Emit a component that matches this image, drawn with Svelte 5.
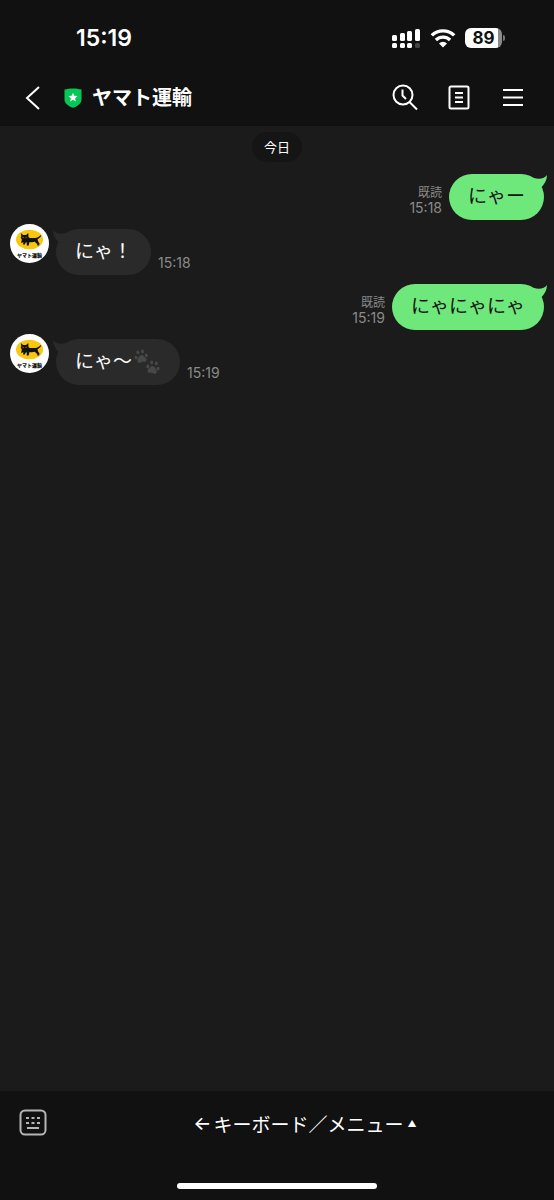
<script>
  const title = "ヤマト運輸";

  const messages = [
    { id: 1, mine: true, text: "にゃー", time: "15:18" },
    { id: 2, mine: false, text: "にゃ！", time: "15:18" },
    { id: 3, mine: true, text: "にゃにゃにゃ", time: "15:19" },
    { id: 4, mine: false, text: "にゃ〜", time: "15:19", paws: true },
  ];

  const toes = [
    [3, 9],
    [6, 4],
    [11, 4],
    [14, 9],
  ];
</script>

{#snippet paw()}
  {#each toes as [x, y]}
    <ellipse cx={x} cy={y} rx="1.6" ry="2" />
  {/each}
  <path d="M8.5 7.500c-2.200 0-2.600 2-4 3.300-1.600 1.600-1 4.400 1.300 4.400 1.100 0 1.700-.5 2.700-.5s1.600.5 2.700.5c2.300 0 2.900-2.800 1.300-4.400-1.400-1.300-1.800-3.300-4-3.300z" />
{/snippet}

<div class="app">
  <header>
    <div class="status-bar">
      <span class="clock">15:19</span>
      <div class="status-icons">
        <svg width="30" height="22" viewBox="0 0 30 22" fill="#fff" aria-hidden="true">
          <rect x="1" y="8" width="5" height="6" rx="1.500" />
          <rect x="9" y="6" width="5" height="8" rx="1.500" />
          <rect x="16" y="4" width="5" height="10" rx="1.500" />
          <rect x="24" y="2" width="5" height="12" rx="1.500" />
          <rect x="1" y="16" width="5" height="5" rx="1.500" />
          <rect x="9" y="16" width="5" height="5" rx="1.500" />
          <rect x="16" y="16" width="5" height="5" rx="1.500" />
          <rect x="24" y="16" width="5" height="5" rx="1.500" fill="#444" />
        </svg>
        <svg width="26" height="20" viewBox="0 0 26 20" aria-hidden="true">
          <g fill="none" stroke="#fff" stroke-width="3.400">
            <path d="M1.800 7.400a16 16 0 0 1 22.400 0" />
            <path d="M5.900 12a10.200 10.200 0 0 1 14.200 0" />
          </g>
          <path d="M13 19.500l-4-4.100a5.700 5.700 0 0 1 8 0z" fill="#fff" />
        </svg>
        <div class="battery"><span>89</span></div>
      </div>
    </div>

    <nav>
      <button class="back" aria-label="戻る">
        <svg width="16" height="26" viewBox="0 0 16 26" fill="none" stroke="#fff" stroke-width="2">
          <path d="M15 2L3 13l12 11" />
        </svg>
      </button>
      <svg class="shield" width="18" height="20" viewBox="0 0 18 20" aria-hidden="true">
        <path d="M9 0.500C6.500 0.500 3 .9.500 1.600V11.500C.5 15.500 4.500 18.200 9 19.800c4.500-1.600 8.500-4.300 8.500-8.300V1.600C15 .9 11.500.5 9 .5z" fill="#06c755" />
        <path d="M9 4.800l1.300 3 3.200.3-2.400 2.100.7 3.200L9 11.700l-2.800 1.700.7-3.200-2.400-2.100 3.200-.3z" fill="#fff" />
      </svg>
      <h1>{title}</h1>
      <div class="actions">
        <button aria-label="検索">
          <svg width="28" height="28" viewBox="0 0 28 28" fill="none" stroke="#fff" stroke-width="2">
            <circle cx="12" cy="11" r="9.500" />
            <path d="M18.500 18l7.500 7.500M11.500 5.500v6l3.500 3.500" />
          </svg>
        </button>
        <button aria-label="ノート">
          <svg width="28" height="28" viewBox="0 0 28 28" fill="none" stroke="#fff" stroke-width="2">
            <rect x="4.500" y="2.500" width="19" height="22" rx="1.500" />
            <path d="M10 9h8M10 13.500h8M10 18h8" />
          </svg>
        </button>
        <button aria-label="メニュー">
          <svg width="28" height="28" viewBox="0 0 28 28" fill="none" stroke="#fff" stroke-width="2">
            <path d="M4 6h20M4 13.500h20M4 21h20" />
          </svg>
        </button>
      </div>
    </nav>
  </header>

  <main>
    <div class="date">今日</div>
    {#each messages as message (message.id)}
      <div class="row" class:mine={message.mine}>
        {#if !message.mine}
          <svg class="avatar" width="39" height="39" viewBox="0 0 39 39" role="img" aria-label={title}>
            <circle cx="19.500" cy="19.500" r="19.500" fill="#fff" />
            <ellipse cx="19.500" cy="15.500" rx="13.500" ry="9.800" fill="#f9c70c" />
            <path
              d="M10.800 9l2.300 2h3l2.200-2 .2 4c.5.800 1.200 1.100 2.200 1.100h4.600c1.800-.1 3.300-1.300 5-2.600.6-.4 1.200.2.700.8-1.100 1.300-2.100 2.300-3.400 3 .1 1.800.9 2.800 1.900 4.300l-.5 1.900h-1.700l-.1-1.400-2.500-2.400c-1.600.6-3.500.6-5.200.2l-.8 3.700h-2l.1-3-.9-.4-1.100 2.200h-1.800l.4-2.500-1.600 1.100-.7-.6.8-2.600-1.200-2.300.6-1.300z"
              fill="#111"
            />
            <path d="M12.500 13.300l1.200.4M16.600 13.200l-1.100.5" stroke="#f9c70c" stroke-width=".7" />
            <text x="19.500" y="32.500" text-anchor="middle">{title}</text>
          </svg>
        {/if}
        <div class="bubble">
          <svg class="tail" width="16" height="16" viewBox="0 0 16 16" aria-hidden="true">
            <path d="M16 0C14 3 9 5 3 3L2 8l7 6 1.700-2C13.500 9 16 5 16 0z" />
          </svg>
          <span>{message.text}</span>
          {#if message.paws}
            <svg class="paws" width="28" height="28" viewBox="0 0 28 28" role="img" aria-label="足あと">
              <g transform="translate(0 0) rotate(-12 8 8) scale(.95)">{@render paw()}</g>
              <g transform="translate(12 11) rotate(12 8 8) scale(.95)">{@render paw()}</g>
            </svg>
          {/if}
        </div>
        <div class="meta">
          {#if message.mine}<span class="read">既読</span>{/if}
          <time>{message.time}</time>
        </div>
      </div>
    {/each}
  </main>

  <footer>
    <div class="menu-bar">
      <button class="keyboard" aria-label="キーボード">
        <svg width="28" height="28" viewBox="0 0 28 28" fill="none" stroke="#b5b5b5" stroke-width="2">
          <rect x="1.500" y="1.500" width="25" height="24" rx="4.500" />
          <path d="M7 9h3M12.500 9h3M18 9h3M7 14h3M12.500 14h3M18 14h3M8 19h12" />
        </svg>
      </button>
      <button class="menu-toggle">
        <span class="arrow">←</span><span>キーボード／メニュー</span><span class="up">▲</span>
      </button>
    </div>
    <div class="home-indicator"></div>
  </footer>
</div>

<style>
  :global(body) {
    margin: 0;
    background: #111;
  }

  .app {
    display: flex;
    flex-direction: column;
    min-height: 100vh;
    background: #1b1b1b;
    color: #fff;
    font-family: Inter, "Noto Sans CJK JP", sans-serif;
  }

  button {
    display: flex;
    align-items: center;
    justify-content: center;
    padding: 0;
    border: none;
    background: none;
    color: inherit;
    font: inherit;
    cursor: pointer;
  }

  svg {
    display: block;
    flex-shrink: 0;
  }

  header {
    background: #111;
    padding-bottom: 6px;
  }

  .status-bar {
    display: flex;
    align-items: center;
    justify-content: space-between;
    height: 76px;
    padding: 0 52px 0 76px;
  }

  .clock {
    font-size: 23px;
    font-weight: 600;
  }

  .status-icons {
    display: flex;
    align-items: center;
    gap: 9px;
  }

  .battery {
    position: relative;
    width: 37px;
    height: 20px;
    border-radius: 6px;
    background: linear-gradient(to right, #fff 89%, #8a8a8a 89%);
    color: #111;
    font-size: 17px;
    font-weight: 700;
    line-height: 20px;
    text-align: center;
  }

  .battery::after {
    content: "";
    position: absolute;
    left: 38px;
    top: 7px;
    width: 2px;
    height: 6px;
    border-radius: 0 2px 2px 0;
    background: #777;
  }

  nav {
    display: flex;
    align-items: center;
    height: 44px;
    padding-right: 14px;
  }

  .back {
    width: 64px;
    height: 44px;
  }

  h1 {
    flex: 1;
    margin: 0 0 0 10px;
    font-size: 20px;
    font-weight: 600;
    line-height: 28px;
  }

  .actions {
    display: flex;
  }

  .actions button {
    width: 54px;
    height: 44px;
  }

  main {
    flex: 1;
    display: flex;
    flex-direction: column;
    gap: 4px;
    padding: 6px 10px;
  }

  .date {
    align-self: center;
    margin-bottom: 3px;
    padding: 0 12px;
    border-radius: 15px;
    background: #151515;
    font-size: 13px;
    line-height: 30px;
  }

  .row {
    display: flex;
    align-items: flex-end;
    gap: 7px;
  }

  .row.mine {
    flex-direction: row-reverse;
  }

  .avatar {
    align-self: flex-start;
  }

  .avatar text {
    font-size: 5px;
    font-weight: 900;
    fill: #111;
  }

  .bubble {
    position: relative;
    display: flex;
    align-items: center;
    margin-top: 5px;
    padding: 0 19px;
    border-radius: 23px;
    background: #2a2a2a;
    font-size: 19px;
    line-height: 46px;
  }

  .mine .bubble {
    background: #6ee87b;
    color: #111;
  }

  .tail {
    position: absolute;
    top: 1px;
    left: -3px;
    fill: #2a2a2a;
    transform: scaleX(-1);
  }

  .mine .tail {
    left: auto;
    right: -3px;
    fill: #6ee87b;
    transform: none;
  }

  .paws {
    margin-left: 1px;
    fill: #484848;
  }

  .meta {
    display: flex;
    flex-direction: column;
    align-items: flex-end;
    padding-bottom: 4px;
    color: #8a8a8a;
    font-size: 14px;
    line-height: 16px;
  }

  .read {
    font-size: 12px;
    line-height: 15px;
  }

  footer {
    background: #111;
    padding-bottom: 11px;
  }

  .menu-bar {
    display: flex;
    height: 64px;
  }

  .keyboard {
    width: 66px;
  }

  .menu-toggle {
    flex: 1;
    padding-right: 10px;
    font-size: 19px;
  }

  .arrow {
    margin-right: 2px;
    font-weight: 500;
  }

  .up {
    margin-left: 4px;
    font-size: 9px;
  }

  .home-indicator {
    width: 36%;
    height: 6px;
    margin: 28px auto 0;
    border-radius: 3px;
    background: #fff;
  }
</style>
